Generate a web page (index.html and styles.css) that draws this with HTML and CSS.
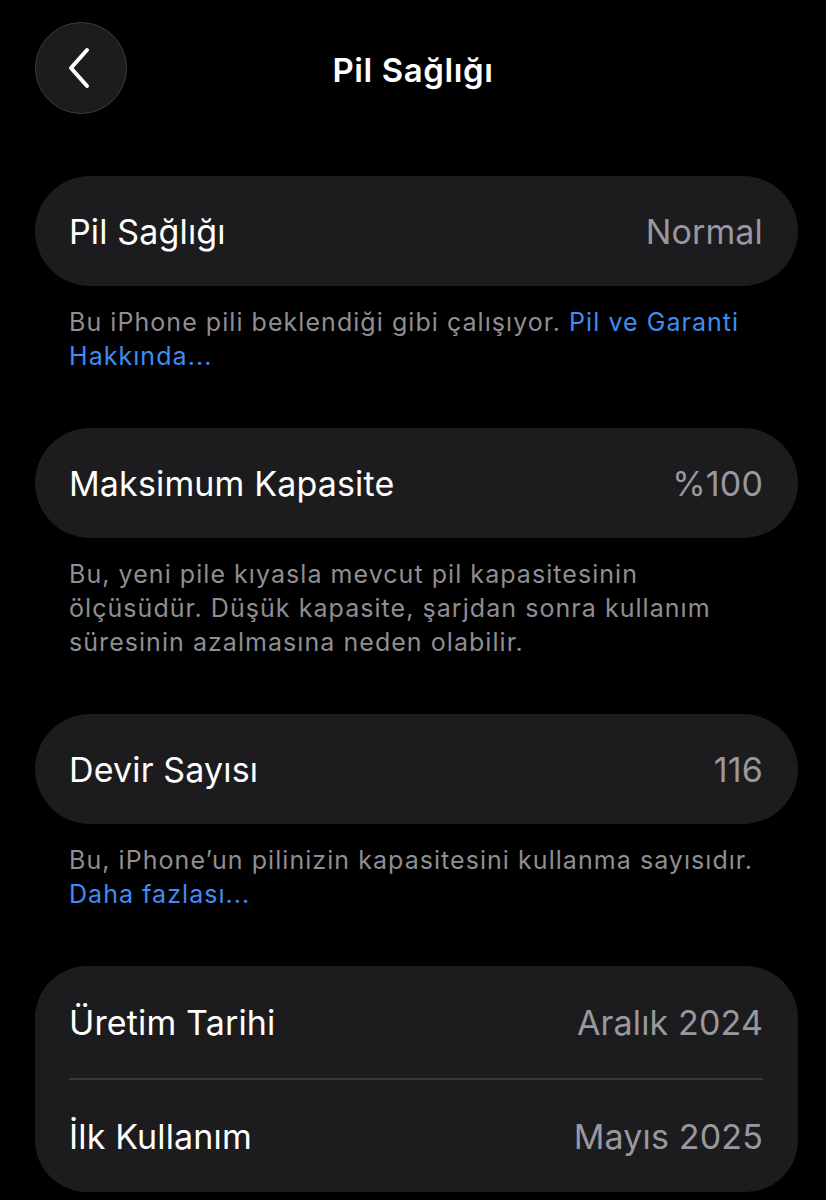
FILE: index.html
```html
<!DOCTYPE html>
<html lang="tr">
<head>
<meta charset="utf-8">
<link rel="stylesheet" href="styles.css">
</head>
<body>
<div class="page">
  <header class="nav">
    <div class="back">
      <svg width="26" height="44" viewBox="0 0 26 44"><path d="M21 4 L5 22 L21 40" fill="none" stroke="#fff" stroke-width="4" stroke-linecap="round" stroke-linejoin="round"/></svg>
    </div>
    <h1 class="title">Pil Sağlığı</h1>
  </header>

  <section class="group">
    <div class="card">
      <div class="row"><span class="label">Pil Sağlığı</span><span class="value">Normal</span></div>
    </div>
    <p class="foot">Bu iPhone pili beklendiği gibi çalışıyor. <span class="link">Pil ve Garanti Hakkında...</span></p>
  </section>

  <section class="group">
    <div class="card">
      <div class="row"><span class="label">Maksimum Kapasite</span><span class="value">%100</span></div>
    </div>
    <p class="foot">Bu, yeni pile kıyasla mevcut pil kapasitesinin ölçüsüdür. Düşük kapasite, şarjdan sonra kullanım süresinin azalmasına neden olabilir.</p>
  </section>

  <section class="group">
    <div class="card">
      <div class="row"><span class="label">Devir Sayısı</span><span class="value">116</span></div>
    </div>
    <p class="foot">Bu, iPhone’un pilinizin kapasitesini kullanma sayısıdır. <span class="link">Daha fazlası...</span></p>
  </section>

  <section class="group">
    <div class="card card-multi">
      <div class="row row-tall"><span class="label">Üretim Tarihi</span><span class="value">Aralık 2024</span></div>
      <div class="sep"></div>
      <div class="row row-tall"><span class="label">İlk Kullanım</span><span class="value">Mayıs 2025</span></div>
    </div>
  </section>
</div>
</body>
</html>
```

FILE: styles.css
```css
html, body {
  margin: 0;
  padding: 0;
  background: #000;
}
body {
  font-family: Inter, Roboto, "Liberation Sans", sans-serif;
  color: #fff;
  -webkit-font-smoothing: antialiased;
}
.page {
  padding: 0 28px 0 35px;
}
.nav {
  position: relative;
  height: 176px;
}
.back {
  position: absolute;
  left: 0;
  top: 22px;
  width: 92px;
  height: 92px;
  box-sizing: border-box;
  border-radius: 50%;
  background: #1c1c1e;
  border: 1.5px solid #3a3a3c;
  display: flex;
  align-items: center;
  justify-content: center;
}
.back svg {
  margin-left: -4px;
}
.title {
  margin: 0;
  padding-top: 49px;
  text-align: center;
  font-size: 33px;
  font-weight: 600;
  line-height: 42px;
  margin-left: -7px;
  letter-spacing: 0.6px;
}
.group {
  margin-bottom: 55px;
}
.card {
  background: #1c1c1e;
  border-radius: 55px;
  padding: 0 35px 0 34px;
}
.card-multi {
  border-radius: 52px;
}
.row {
  height: 110px;
  display: flex;
  align-items: center;
  justify-content: space-between;
  font-size: 34px;
  letter-spacing: 0.15px;
}
.row-tall {
  height: 112px;
}
.label {
  color: #fff;
}
.value {
  color: #98989e;
}
.sep {
  height: 2px;
  background: #38383a;
}
.foot {
  margin: 19px 0 0;
  padding: 0 40px 0 34px;
  font-size: 25px;
  line-height: 34px;
  color: #8e8e93;
  letter-spacing: 1.05px;
}
.link {
  color: #3f8cf2;
}
```
